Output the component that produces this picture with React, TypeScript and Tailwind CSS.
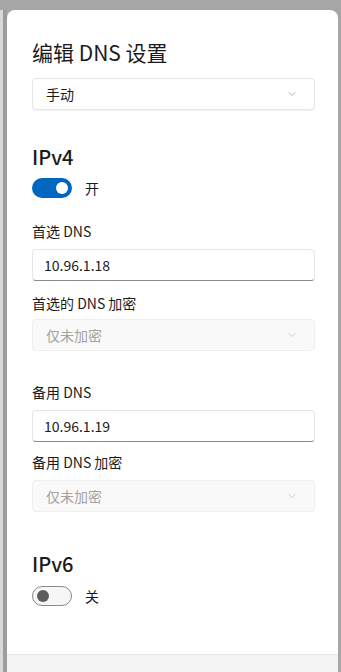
import { ChevronDown } from "lucide-react";

const font = { fontFamily: '"Noto Sans CJK SC", "Noto Sans", sans-serif' };

function Select({ value, disabled }: { value: string; disabled?: boolean }) {
  return (
    <div
      className={
        "flex items-center justify-between h-[32px] pl-[13px] pr-[16px] rounded-[4px] border text-[14px] " +
        (disabled
          ? "bg-[#f9f9f9] border-[#efefef] text-[#a3a3a3]"
          : "bg-white border-[#e6e6e6] text-[#1b1b1b] shadow-[0_1px_1px_rgba(0,0,0,0.06)]")
      }
    >
      <span>{value}</span>
      <ChevronDown size={12} strokeWidth={1.3} className={disabled ? "text-[#b5b5b5]" : "text-[#8a8a8a]"} />
    </div>
  );
}

function Input({ value }: { value: string }) {
  return (
    <div className="flex items-center h-[32px] pl-[11px] rounded-[4px] border border-[#e6e6e6] border-b-[#8a8a8a] bg-white text-[14px] text-[#1b1b1b]">
      {value}
    </div>
  );
}

function Toggle({ on }: { on: boolean }) {
  return (
    <div className="flex items-center gap-[13px] h-[20px]">
      {on ? (
        <div className="w-[40px] h-[20px] rounded-full bg-[#0067c0] flex items-center justify-end pr-[4px]">
          <div className="w-[12px] h-[12px] rounded-full bg-white" />
        </div>
      ) : (
        <div className="w-[40px] h-[20px] rounded-full border border-[#8a8a8a] bg-[#f6f6f6] flex items-center pl-[4px]">
          <div className="w-[12px] h-[12px] rounded-full bg-[#5c5c5c]" />
        </div>
      )}
      <span className="text-[14px] text-[#1b1b1b]">{on ? "开" : "关"}</span>
    </div>
  );
}

function Label({ text, className }: { text: string; className: string }) {
  return <div className={"text-[14px] leading-[20px] text-[#1b1b1b] " + className}>{text}</div>;
}

export default function App() {
  return (
    <div className="w-[341px] h-[672px] bg-[#a6a6a6] flex flex-col overflow-hidden" style={font}>
      <div className="h-[10px] shrink-0" />
      <div className="flex flex-1 min-h-0">
        {/* window behind the dialog */}
        <div className="w-[3px] bg-[#d8d8d8]" />
        <div className="w-[4px] bg-[#9c9c9c]" />
        <div className="flex-1 flex flex-col bg-white rounded-t-[8px]">
          <div className="flex-1 px-[25px] pr-[23px] pt-[28px]">
            <h1 className="text-[21px] leading-[28px] text-[#1b1b1b]">编辑 DNS 设置</h1>
            <div className="mt-[12px]">
              <Select value="手动" />
            </div>

            <h2 className="mt-[33px] text-[20px] leading-[28px] font-medium text-[#1b1b1b]">IPv4</h2>
            <div className="mt-[7px]">
              <Toggle on />
            </div>
            <Label text="首选 DNS" className="mt-[23px]" />
            <div className="mt-[8px]">
              <Input value="10.96.1.18" />
            </div>
            <Label text="首选的 DNS 加密" className="mt-[12px]" />
            <div className="mt-[6px]">
              <Select value="仅未加密" disabled />
            </div>

            <Label text="备用 DNS" className="mt-[31px]" />
            <div className="mt-[8px]">
              <Input value="10.96.1.19" />
            </div>
            <Label text="备用 DNS 加密" className="mt-[10px]" />
            <div className="mt-[8px]">
              <Select value="仅未加密" disabled />
            </div>

            <h2 className="mt-[38px] text-[20px] leading-[28px] font-medium text-[#1b1b1b]">IPv6</h2>
            <div className="mt-[8px]">
              <Toggle on={false} />
            </div>
          </div>
          <div className="h-[18px] shrink-0 bg-[#f3f3f3] border-t border-[#e5e5e5]" />
        </div>
        <div className="w-[3px] bg-[#a6a6a6]" />
      </div>
    </div>
  );
}
